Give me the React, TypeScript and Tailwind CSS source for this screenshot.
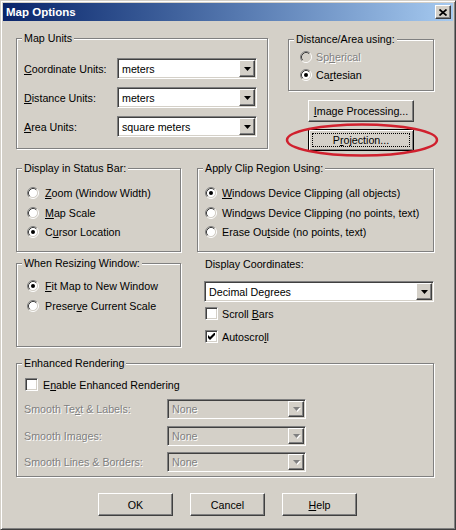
import React from 'react';

const raised =
  'border border-t-white border-l-white border-r-[#404040] border-b-[#404040] shadow-[inset_-1px_-1px_0_#808080] bg-[#d4d0c8]';
const sunken =
  'border border-t-[#808080] border-l-[#808080] border-r-white border-b-white shadow-[inset_1px_1px_0_#404040,inset_-1px_-1px_0_#d4d0c8]';
const dimText = 'text-[#808080] [text-shadow:1px_1px_0_#fff]';

type Kids = { children?: React.ReactNode; className?: string };

const Group: React.FC<Kids & { label: React.ReactNode }> = ({ label, className = '', children }) => (
  <div className={`relative border border-[#808080] shadow-[inset_1px_1px_0_#fff,1px_1px_0_#fff] ${className}`}>
    <span className="absolute left-[5px] top-[-8px] bg-[#d4d0c8] px-[2px] leading-[14px] whitespace-nowrap">{label}</span>
    {children}
  </div>
);

const Radio: React.FC<{ checked?: boolean; disabled?: boolean }> = ({ checked, disabled }) => (
  <svg width="12" height="12" viewBox="0 0 12 12" className="shrink-0">
    <circle cx="6" cy="6" r="4.5" fill={disabled ? '#d4d0c8' : '#fff'} />
    <path d="M2.11 9.89A5.5 5.5 0 0 1 9.89 2.11" stroke="#808080" fill="none" />
    <path d="M9.89 2.11A5.5 5.5 0 0 1 2.11 9.89" stroke="#fff" fill="none" />
    <path d="M2.82 9.18A4.5 4.5 0 0 1 9.18 2.82" stroke="#404040" fill="none" />
    <path d="M9.18 2.82A4.5 4.5 0 0 1 2.82 9.18" stroke="#d4d0c8" fill="none" />
    {checked && <circle cx="6" cy="6" r="2" fill={disabled ? '#808080' : '#000'} />}
  </svg>
);

const RadioRow: React.FC<Kids & { checked?: boolean; disabled?: boolean }> = ({ checked, disabled, className = '', children }) => (
  <div className={`flex items-center h-[16px] whitespace-nowrap ${className}`}>
    <Radio checked={checked} disabled={disabled} />
    <span className={disabled ? dimText : ''}>{children}</span>
  </div>
);

const Check: React.FC<{ checked?: boolean }> = ({ checked }) => (
  <div className={`w-[13px] h-[13px] bg-white shrink-0 flex items-center justify-center ${sunken}`}>
    {checked && (
      <svg width="7" height="7" viewBox="0 0 7 7">
        <polygon points="0,2 2,4 7,-1 7,2 2,7 0,5" fill="#000" />
      </svg>
    )}
  </div>
);

const DropBtn: React.FC<{ disabled?: boolean }> = ({ disabled }) => (
  <div className={`w-[16px] shrink-0 flex items-center justify-center ${raised}`}>
    <svg width="7" height="4" viewBox="0 0 7 4" className={disabled ? 'drop-shadow-[1px_1px_0_#fff]' : ''}>
      <polygon points="0,0 7,0 3.5,4" fill={disabled ? '#808080' : '#000'} />
    </svg>
  </div>
);

const Combo: React.FC<{ value: string; disabled?: boolean; className?: string }> = ({ value, disabled, className = '' }) => (
  <div className={`flex items-stretch p-[1px] ${sunken} ${disabled ? 'bg-[#d4d0c8]' : 'bg-white'} ${className}`}>
    <span className={`flex-1 flex items-center pl-[3px] ${disabled ? dimText : ''}`}>{value}</span>
    <DropBtn disabled={disabled} />
  </div>
);

const Btn: React.FC<Kids & { focused?: boolean }> = ({ focused, className = '', children }) =>
  focused ? (
    <div className={`flex p-[3px] bg-[#d4d0c8] border border-black shadow-[inset_1px_1px_0_#fff,inset_-1px_-1px_0_#808080] ${className}`}>
      <div className="flex-1 flex items-center justify-center border border-dotted border-black">{children}</div>
    </div>
  ) : (
    <div className={`flex items-center justify-center ${raised} ${className}`}>{children}</div>
  );

const App: React.FC = () => {
  return (
    <div className="relative w-[456px] h-[530px] bg-[#d4d0c8] border border-t-[#d4d0c8] border-l-[#d4d0c8] border-r-[#404040] border-b-[#404040] shadow-[inset_1px_1px_0_#fff,inset_-1px_-1px_0_#808080] p-[2px] text-[10.7px] leading-[14px] text-black font-['Liberation_Sans',Arial,sans-serif] overflow-hidden">
      {/* title bar */}
      <div className="h-[18px] flex items-center justify-between bg-linear-to-r from-[#0a246a] to-[#a6caf0] pl-[3px] pr-[2px]">
        <span className="text-white font-bold text-[11.5px]">Map Options</span>
        <div className={`w-[16px] h-[14px] flex items-center justify-center ${raised}`}>
          <svg width="8" height="7" viewBox="0 0 8 7">
            <path d="M0.5 0.5L7.5 6.5M7.5 0.5L0.5 6.5" stroke="#000" strokeWidth="1.7" />
          </svg>
        </div>
      </div>

      <div className="pl-[13px] pt-[17px]">
        {/* row 1 */}
        <div className="flex items-start">
          <Group label="Map Units" className="w-[252px] h-[111px]">
            <div className="flex flex-col gap-[8px] pt-[19px] pl-[7px]">
              {[
                [<><u>C</u>oordinate Units:</>, 'meters'],
                [<><u>D</u>istance Units:</>, 'meters'],
                [<><u>A</u>rea Units:</>, 'square meters'],
              ].map(([label, value], i) => (
                <div key={i} className="flex items-center h-[21px]">
                  <span className="w-[93px]">{label}</span>
                  <Combo value={value as string} className="w-[140px] h-[21px]" />
                </div>
              ))}
            </div>
          </Group>

          <div className="ml-[20px] w-[146px] flex flex-col">
            <Group label="Distance/Area using:" className="mt-[1px] h-[52px]">
              <div className="flex flex-col gap-[2px] pt-[9px] pl-[11px]">
                <RadioRow disabled className="gap-[4px]">Sp<u>h</u>erical</RadioRow>
                <RadioRow checked className="gap-[4px]">Ca<u>r</u>tesian</RadioRow>
              </div>
            </Group>
            <div className="mt-[9px] flex flex-col items-center gap-[7px]">
              <Btn className="w-[106px] h-[22px]"><u>I</u>mage Processing...</Btn>
              <Btn focused className="w-[106px] h-[22px]">P<u>r</u>ojection...</Btn>
            </div>
          </div>
        </div>

        {/* row 2 */}
        <div className="mt-[17px] flex">
          <Group label="Display in Status Bar:" className="w-[165px] h-[84px]">
            <div className="flex flex-col gap-[3.5px] pt-[16px] pl-[10px]">
              <RadioRow className="gap-[6px]"><u>Z</u>oom (Window Width)</RadioRow>
              <RadioRow className="gap-[6px]"><u>M</u>ap Scale</RadioRow>
              <RadioRow checked className="gap-[6px]">C<u>u</u>rsor Location</RadioRow>
            </div>
          </Group>
          <Group label="Apply Clip Region Using:" className="ml-[16px] w-[237px] h-[84px]">
            <div className="flex flex-col gap-[3.5px] pt-[16px] pl-[7px]">
              <RadioRow checked className="gap-[5px]"><u>W</u>indows Device Clipping (all objects)</RadioRow>
              <RadioRow className="gap-[5px]">Wind<u>o</u>ws Device Clipping (no points, text)</RadioRow>
              <RadioRow className="gap-[5px]">Erase Ou<u>t</u>side (no points, text)</RadioRow>
            </div>
          </Group>
        </div>

        {/* row 3 */}
        <div className="mt-[11px] flex items-start">
          <Group label="When Resizing Window:" className="w-[165px] h-[84px]">
            <div className="flex flex-col gap-[3.5px] pt-[14px] pl-[10px]">
              <RadioRow checked className="gap-[6px]"><u>F</u>it Map to New Window</RadioRow>
              <RadioRow className="gap-[6px]">Preser<u>v</u>e Current Scale</RadioRow>
            </div>
          </Group>
          <div className="ml-[23px] w-[230px] mt-[-6px] flex flex-col">
            <span className="pl-[1px] h-[14px]">Display Coordinates:</span>
            <Combo value="Decimal Degrees" className="mt-[10px] h-[21px]" />
            <div className="mt-[5px] pl-[1px] flex items-center gap-[4px] h-[13px]">
              <Check />
              <span>Scroll <u>B</u>ars</span>
            </div>
            <div className="mt-[10px] pl-[1px] flex items-center gap-[4px] h-[13px]">
              <Check checked />
              <span>Autoscro<u>l</u>l</span>
            </div>
          </div>
        </div>

        {/* row 4 */}
        <Group label="Enhanced Rendering" className="mt-[16px] w-[418px] h-[114px]">
          <div className="flex flex-col pt-[14px] pl-[7px]">
            <div className="ml-[1px] flex items-center gap-[5px] h-[13px]">
              <Check />
              <span>E<u>n</u>able Enhanced Rendering</span>
            </div>
            {[
              [<>Smooth Te<u>x</u>t &amp; Labels:</>, 'mt-[8px]'],
              [<>Smooth Images:</>, 'mt-[7px]'],
              [<>Smooth Lines &amp; Borders:</>, 'mt-[6px]'],
            ].map(([label, mt], i) => (
              <div key={i} className={`flex items-center h-[20px] ${mt}`}>
                <span className={`w-[143px] ${dimText}`}>{label}</span>
                <Combo value="None" disabled className="w-[139px] h-[20px]" />
              </div>
            ))}
          </div>
        </Group>

        {/* row 5 */}
        <div className="mt-[16px] ml-[82px] flex gap-[17px]">
          <Btn className="w-[75px] h-[23px]">OK</Btn>
          <Btn className="w-[75px] h-[23px]">Cancel</Btn>
          <Btn className="w-[75px] h-[23px]"><u>H</u>elp</Btn>
        </div>
      </div>

      {/* red annotation ellipse */}
      <svg className="absolute left-[283px] top-[119px] pointer-events-none" width="158" height="40" viewBox="0 0 158 40">
        <ellipse cx="78" cy="20" rx="75" ry="15.5" fill="none" stroke="#d0202e" strokeWidth="2.5" />
      </svg>
    </div>
  );
};

export default App;
